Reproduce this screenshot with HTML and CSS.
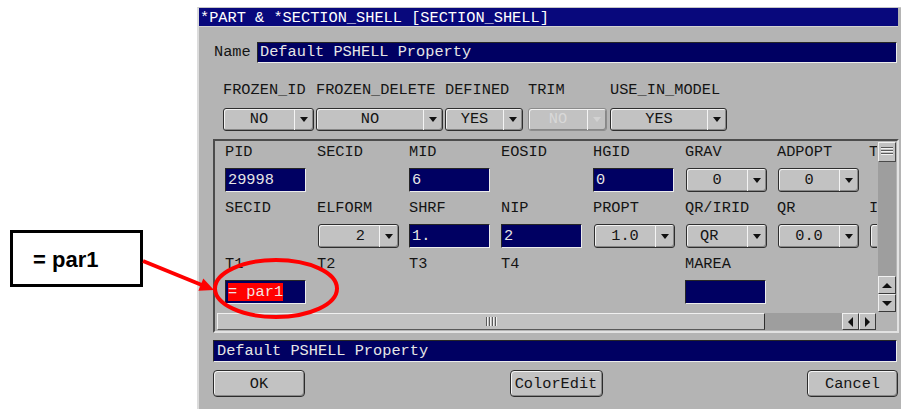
FILE: index.html
```html
<!DOCTYPE html>
<html lang="en">
<head>
<meta charset="utf-8">
<title>*PART &amp; *SECTION_SHELL</title>
<link rel="stylesheet" href="styles.css">
</head>
<body>
<div class="dialog">
  <div class="titlebar">*PART &amp; *SECTION_SHELL [SECTION_SHELL]</div>
  <div class="dialog-body">
    <div class="name-row">
      <span class="name-label">Name</span>
      <div class="field name-field">Default PSHELL Property</div>
    </div>

    <div class="flags">
      <span class="lbl">FROZEN_ID</span>
      <span class="lbl">FROZEN_DELETE</span>
      <span class="lbl">DEFINED</span>
      <span class="lbl">TRIM</span>
      <span class="lbl">USE_IN_MODEL</span>
      <div class="dd w-frozen-id"><span class="dd-val">NO</span><span class="dd-arrow"></span></div>
      <div class="dd w-frozen-del"><span class="dd-val">NO</span><span class="dd-arrow"></span></div>
      <div class="dd w-defined"><span class="dd-val">YES</span><span class="dd-arrow"></span></div>
      <div class="dd w-trim off"><span class="dd-val">NO</span><span class="dd-arrow"></span></div>
      <div class="dd w-use"><span class="dd-val">YES</span><span class="dd-arrow"></span></div>
    </div>

    <div class="panel">
      <div class="view">
        <div class="sheet">
          <!-- PART card -->
          <div class="cell"><span class="lbl">PID</span><div class="field input">29998</div></div>
          <div class="cell"><span class="lbl">SECID</span></div>
          <div class="cell"><span class="lbl">MID</span><div class="field input">6</div></div>
          <div class="cell"><span class="lbl">EOSID</span></div>
          <div class="cell"><span class="lbl">HGID</span><div class="field input">0</div></div>
          <div class="cell"><span class="lbl">GRAV</span><div class="dd cell-dd"><span class="dd-val">0</span><span class="dd-arrow"></span></div></div>
          <div class="cell"><span class="lbl">ADPOPT</span><div class="dd cell-dd"><span class="dd-val">0</span><span class="dd-arrow"></span></div></div>
          <div class="cell"><span class="lbl">T</span></div>

          <!-- SECTION_SHELL card 1 -->
          <div class="cell"><span class="lbl">SECID</span></div>
          <div class="cell"><span class="lbl">ELFORM</span><div class="dd cell-dd"><span class="dd-val val-right">2</span><span class="dd-arrow"></span></div></div>
          <div class="cell"><span class="lbl">SHRF</span><div class="field input">1.</div></div>
          <div class="cell"><span class="lbl">NIP</span><div class="field input">2</div></div>
          <div class="cell"><span class="lbl">PROPT</span><div class="dd cell-dd"><span class="dd-val">1.0</span><span class="dd-arrow"></span></div></div>
          <div class="cell"><span class="lbl">QR/IRID</span><div class="dd cell-dd"><span class="dd-val val-left">QR</span><span class="dd-arrow"></span></div></div>
          <div class="cell"><span class="lbl">QR</span><div class="dd cell-dd"><span class="dd-val">0.0</span><span class="dd-arrow"></span></div></div>
          <div class="cell"><span class="lbl">I</span><div class="dd cell-dd"><span class="dd-val"></span><span class="dd-arrow"></span></div></div>

          <!-- SECTION_SHELL card 2 -->
          <div class="cell"><span class="lbl">T1</span><div class="field input"><span class="sel">= par1</span></div></div>
          <div class="cell"><span class="lbl">T2</span></div>
          <div class="cell"><span class="lbl">T3</span></div>
          <div class="cell"><span class="lbl">T4</span></div>
          <div class="cell"><span class="lbl"></span></div>
          <div class="cell"><span class="lbl">MAREA</span><div class="field input"></div></div>
          <div class="cell"><span class="lbl"></span></div>
          <div class="cell"><span class="lbl"></span></div>
        </div>
      </div>

      <div class="vscroll">
        <div class="vthumb"></div>
        <div class="trough"></div>
        <div class="sbtn up"></div>
        <div class="sbtn down"></div>
      </div>

      <div class="hscroll">
        <div class="hthumb"></div>
        <div class="trough"></div>
        <div class="sbtn left"></div>
        <div class="sbtn right"></div>
      </div>
      <div class="corner"></div>
    </div>

    <div class="field status">Default PSHELL Property</div>

    <div class="buttons">
      <button class="btn btn-ok" type="button">OK</button>
      <button class="btn btn-color" type="button">ColorEdit</button>
      <button class="btn btn-cancel" type="button">Cancel</button>
    </div>
  </div>
</div>

<!-- callout pointing at the T1 entry -->
<div class="callout">= par1</div>
<svg class="marks" width="901" height="409" viewBox="0 0 901 409" aria-hidden="true">
  <line x1="143" y1="261" x2="203" y2="285.5" stroke="#ff0000" stroke-width="4"/>
  <polygon points="214,290 203.3,278.6 198.4,290.8" fill="#ff0000"/>
  <ellipse cx="276" cy="288.5" rx="61" ry="28.5" fill="none" stroke="#ff0000" stroke-width="4"/>
</svg>
</body>
</html>
```

FILE: styles.css
```css
:root {
  --mono: "Liberation Mono", "DejaVu Sans Mono", monospace;
  --face: #b4b4b4;
  --raised: #c2c2c2;
  --trough: #9e9e9e;
  --navy: #000062;
  --title: #08087c;
  --ink: #141414;
}

html, body {
  margin: 0;
}

body {
  width: 901px;
  height: 409px;
  box-sizing: border-box;
  padding: 7px 0 0 197px;
  background: #ffffff;
  font-family: var(--mono);
  font-size: 15.3px;
  color: var(--ink);
  position: relative;
  overflow: hidden;
}

/* ---------- dialog frame ---------- */
.dialog {
  width: 704px;
  height: 402px;
  box-sizing: border-box;
  border-left: 2px solid #dcdcdc;
  border-top: 1px solid #c6c6c6;
  background: var(--face);
  display: flex;
  flex-direction: column;
  overflow: hidden;
}

.titlebar {
  height: 18px;
  line-height: 20px;
  margin-right: 3px;
  padding-left: 1px;
  background: var(--title);
  color: #ffffff;
  white-space: pre;
  overflow: hidden;
  border-bottom: 1px solid #d2d2d2;
}

.dialog-body {
  display: flex;
  flex-direction: column;
  padding: 0 2px 0 14px;
}

/* ---------- text fields ---------- */
.field {
  box-sizing: border-box;
  background: var(--navy);
  color: #e6e6e6;
  border: 1px solid;
  border-color: #262626 #ececec #ececec #262626;
  white-space: pre;
  overflow: hidden;
}

.name-row {
  display: flex;
  align-items: center;
  height: 21px;
  margin-top: 15px;
  margin-right: 2px;
}

.name-label {
  width: 43px;
  padding-left: 1px;
  line-height: 17px;
}

.name-field {
  flex: 1;
  height: 21px;
  line-height: 19px;
  padding-left: 2px;
}

.lbl {
  display: block;
  height: 17px;
  line-height: 17px;
  white-space: pre;
}

/* ---------- option menus ---------- */
.flags {
  margin-top: 19px;
  padding-left: 10px;
  display: grid;
  grid-template-columns: 93px 129px 83px 82px 117px;
  grid-template-rows: 17px 23px;
  row-gap: 9px;
}

.dd {
  display: flex;
  height: 23px;
  box-sizing: border-box;
  border: 1px solid #2e2e2e;
  border-radius: 3px;
  background: var(--raised);
  box-shadow: inset 1px 1px 0 #f2f2f2, inset -1px -1px 0 #878787;
}

.dd-val {
  flex: 1;
  text-align: center;
  line-height: 21px;
  white-space: pre;
}

.dd-arrow {
  width: 18px;
  border-left: 1px solid #f4f4f4;
  display: flex;
  align-items: center;
  justify-content: center;
}

.dd-arrow::before {
  content: "";
  border-left: 4px solid transparent;
  border-right: 4px solid transparent;
  border-top: 5px solid #111111;
}

.w-frozen-id { width: 91px; }
.w-frozen-del { width: 127px; }
.w-defined { width: 78px; }
.w-trim { width: 79px; }
.w-use { width: 117px; }

.dd.off {
  border-color: #8c8c8c;
}
.dd.off .dd-val {
  color: #d8d8d8;
}
.dd.off .dd-arrow::before {
  border-top-color: #d2d2d2;
}

/* ---------- scrolled card panel ---------- */
.panel {
  margin-top: 8px;
  height: 194px;
  box-sizing: border-box;
  border: 2px solid;
  border-color: #4c4c4c #e2e2e2 #e2e2e2 #4c4c4c;
  display: grid;
  grid-template-columns: minmax(0, 1fr) 20px;
  grid-template-rows: minmax(0, 1fr) 19px;
}

.view {
  grid-column: 1;
  grid-row: 1;
  overflow: hidden;
  padding: 3px 0 0 10px;
}

.sheet {
  display: grid;
  grid-template-columns: repeat(8, 92px);
  row-gap: 8px;
  width: max-content;
}

.cell {
  display: flex;
  flex-direction: column;
  gap: 7px;
  height: 48px;
}

.input {
  width: 81px;
  height: 24px;
  line-height: 22px;
  padding-left: 2px;
}

.cell-dd {
  width: 81px;
  height: 24px;
  margin-left: 1px;
}
.cell-dd .dd-val {
  line-height: 22px;
}

.val-right {
  text-align: right;
  padding-right: 14px;
}
.val-left {
  text-align: left;
  padding-left: 13px;
}

.sel {
  background: #ff0000;
  color: #f2e2e2;
}

/* ---------- scrollbars ---------- */
.trough {
  flex: 1;
  background: var(--trough);
}

.sbtn {
  box-sizing: border-box;
  background: var(--raised);
  border: 1px solid;
  border-color: #f0f0f0 #3a3a3a #3a3a3a #f0f0f0;
  display: flex;
  align-items: center;
  justify-content: center;
}

.sbtn::before {
  content: "";
}

.sbtn.up::before {
  border-left: 5px solid transparent;
  border-right: 5px solid transparent;
  border-bottom: 5px solid #111111;
}
.sbtn.down::before {
  border-left: 5px solid transparent;
  border-right: 5px solid transparent;
  border-top: 5px solid #111111;
}
.sbtn.left::before {
  border-top: 5px solid transparent;
  border-bottom: 5px solid transparent;
  border-right: 5px solid #111111;
}
.sbtn.right::before {
  border-top: 5px solid transparent;
  border-bottom: 5px solid transparent;
  border-left: 5px solid #111111;
}

.vscroll {
  grid-column: 2;
  grid-row: 1;
  padding: 1px 1px 0 1px;
  display: flex;
  flex-direction: column;
}

.vscroll .sbtn {
  height: 18px;
}

.vthumb {
  height: 20px;
  box-sizing: border-box;
  background: var(--raised);
  border: 1px solid;
  border-color: #f0f0f0 #4a4a4a #4a4a4a #f0f0f0;
  display: flex;
  justify-content: center;
  padding-top: 4px;
}

.vthumb::before {
  content: "";
  width: 12px;
  height: 8px;
  background: repeating-linear-gradient(to bottom, #5a5a5a 0 1px, #f2f2f2 1px 2px, transparent 2px 3px);
}

.hscroll {
  grid-column: 1;
  grid-row: 2;
  padding: 1px 1px 1px 2px;
  display: flex;
}

.hscroll .sbtn {
  width: 17px;
}

.hthumb {
  width: 548px;
  box-sizing: border-box;
  background: var(--raised);
  border: 1px solid;
  border-color: #f0f0f0 #2e2e2e #5a5a5a #f0f0f0;
  display: flex;
  align-items: center;
  justify-content: center;
}

.hthumb::before {
  content: "";
  width: 11px;
  height: 9px;
  background: repeating-linear-gradient(to right, #5a5a5a 0 1px, #f2f2f2 1px 2px, transparent 2px 3px);
}

.corner {
  grid-column: 2;
  grid-row: 2;
}

/* ---------- footer ---------- */
.status {
  margin-top: 7px;
  margin-right: 2px;
  height: 22px;
  line-height: 20px;
  padding-left: 3px;
}

.buttons {
  margin-top: 8px;
  margin-right: 1px;
  display: flex;
  justify-content: space-between;
}

.btn {
  height: 27px;
  padding: 0;
  box-sizing: border-box;
  font: inherit;
  color: var(--ink);
  background: var(--raised);
  border: 1px solid #2c2c2c;
  border-radius: 4px;
  box-shadow: inset 1px 1px 0 #f4f4f4, inset -1px -1px 0 #888888;
}

.btn-ok { width: 92px; }
.btn-color { width: 93px; }
.btn-cancel { width: 91px; }

/* ---------- annotation ---------- */
.callout {
  position: absolute;
  left: 10px;
  top: 230px;
  width: 133px;
  height: 57px;
  box-sizing: border-box;
  border: 3px solid #000000;
  background: #ffffff;
  padding: 14px 0 0 20px;
  font-family: "Liberation Sans", Arial, sans-serif;
  font-weight: bold;
  font-size: 22px;
  line-height: 25px;
  color: #000000;
  white-space: pre;
}

.marks {
  position: absolute;
  left: 0;
  top: 0;
  pointer-events: none;
}
```
